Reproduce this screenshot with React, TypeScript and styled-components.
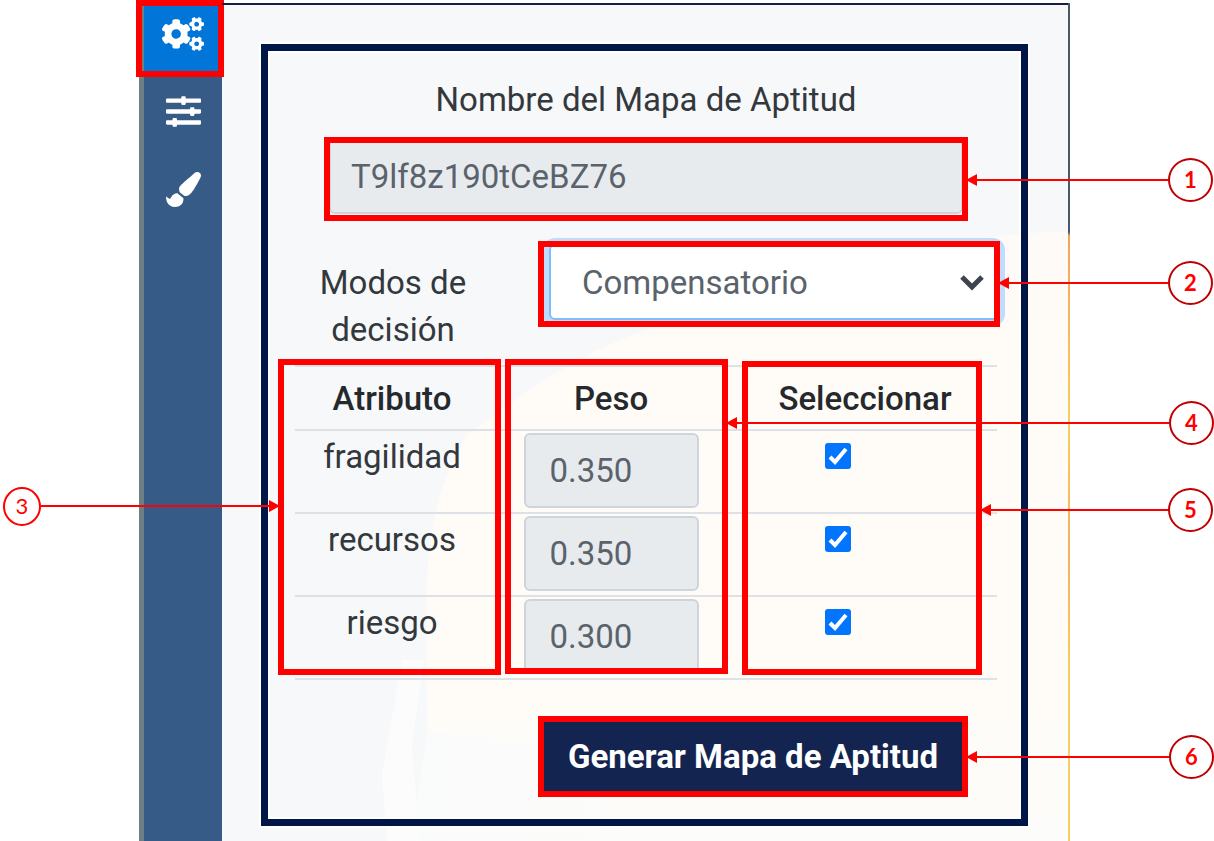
import React from "react";
import styled, { createGlobalStyle, css } from "styled-components";
import { FaCogs, FaPaintBrush, FaSlidersH } from "react-icons/fa";

const GlobalStyle = createGlobalStyle`
  *, *::before, *::after { box-sizing: border-box; }
  body {
    margin: 0;
    background: #fff;
    color: #33383d;
    font: 400 33px/47px Roboto, "Liberation Sans", sans-serif;
  }
`;

const Page = styled.div`
  display: flex;
  min-height: 100vh;
  padding: 3px 144px 0 139px;
`;

const Window = styled.div`
  position: relative;
  display: flex;
  flex: 1;
  min-width: 880px;
  background: #f7f8fa;
`;

const Sidebar = styled.nav`
  display: flex;
  flex-direction: column;
  width: 83px;
  flex: none;
  background: #355b86;
  border-left: 5px solid #6c7f82;
`;

const NavButton = styled.button<{ $active?: boolean }>`
  position: relative;
  display: flex;
  align-items: center;
  justify-content: center;
  height: 78px;
  padding: 0;
  border: 0;
  background: transparent;
  color: #fff;
  ${(p) =>
    p.$active &&
    css`
      height: 69px;
      padding-bottom: 8px;
      background: #0275d8;
    `}
`;

const Main = styled.main`
  position: relative;
  flex: 1;
  padding: 39px 40px 15px 39px;
  border-top: 2px solid #15203f;
  border-right: 2px solid;
  border-image: linear-gradient(#47596b 0 228px, #f3a45c 232px, #f8cf62 50%, #f3b060 65%, #f8cf62 80%) 1;
`;

const Backdrop = styled.svg`
  position: absolute;
  inset: 0;
  width: 100%;
  height: 100%;
`;

const TopEdge = styled.div`
  position: absolute;
  top: -2px;
  left: 0;
  right: 0;
  height: 2px;
  background: #15203f;
`;

const Card = styled.form`
  position: relative;
  min-height: 782px;
  padding: 25px 24px 0 27px;
  border: 7px solid #001647;
  box-shadow: 0 0 0 2px #fff, inset 0 0 0 2px #fff;
`;

const Title = styled.label`
  display: block;
  text-align: center;
`;

const Marked = styled.div`
  position: relative;
`;

const NameField = styled(Marked)`
  margin: 16px 34px 30px;
`;

const ReadOnlyInput = styled.input`
  display: block;
  width: 100%;
  height: 75px;
  padding: 0 20px;
  border: 2px solid #ced4da;
  border-radius: 6px;
  background: #e8ebee;
  color: #5a636c;
  font: inherit;
`;

const ModeRow = styled.div`
  display: flex;
  justify-content: space-between;
`;

const ModeLabel = styled.label`
  flex: 1;
  max-width: 196px;
  padding: 15px 20px 12px;
  text-align: center;
`;

const SelectField = styled(Marked)`
  width: 450px;
  height: 76px;
  margin-right: -2px;
`;

const Select = styled.select`
  width: 100%;
  height: 100%;
  padding: 0 50px 0 31px;
  border: 2px solid #80bdff;
  border-radius: 6px;
  box-shadow: 0 0 0 6px #bfdcff;
  appearance: none;
  background: #fff;
  color: #5a636c;
  font: inherit;
  outline: none;
`;

const Chevron = styled.svg`
  position: absolute;
  top: 30px;
  right: 14px;
  width: 26px;
  height: 18px;
  pointer-events: none;
`;

const TableArea = styled(Marked)`
  margin-bottom: 42px;
`;

const Table = styled.table`
  width: 100%;
  table-layout: fixed;
  border-spacing: 0;
  border-bottom: 2px solid #dee2e6;
`;

const HeadCell = styled.th<{ $width?: number }>`
  width: ${(p) => (p.$width ? `${p.$width}px` : "auto")};
  height: 64px;
  padding: 0;
  border-top: 2px solid #dee2e6;
  color: #24292e;
  font-weight: 500;
`;

const Cell = styled.td`
  height: 83px;
  padding: 2px 0 4px;
  border-top: 2px solid #dee2e6;
  text-align: center;
  vertical-align: top;
`;

const WeightInput = styled(ReadOnlyInput)`
  width: 175px;
  margin: 0 auto;
  padding: 0 24px;
`;

const Check = styled.input`
  appearance: none;
  display: block;
  width: 26px;
  height: 26px;
  margin: 10px auto 0 92px;
  border-radius: 3px;
  background: #0275ff
    url("data:image/svg+xml,%3Csvg xmlns='http://www.w3.org/2000/svg' viewBox='0 0 26 26'%3E%3Cpath d='M5 14l5 5L21 6' fill='none' stroke='%23fff' stroke-width='4'/%3E%3C/svg%3E");
`;

const SubmitField = styled(Marked)`
  width: 418px;
  margin: 0 35px 0 auto;
`;

const Submit = styled.button`
  display: block;
  width: 100%;
  height: 69px;
  padding: 0;
  border: 0;
  background: #12244f;
  color: #fff;
  font: inherit;
  font-weight: 700;
`;

const Frame = styled.div<{ $inset: string; $width?: number }>`
  position: absolute;
  inset: ${(p) => p.$inset};
  ${(p) => p.$width && `width: ${p.$width}px;`}
  border: 6px solid #f00;
  pointer-events: none;
`;

const Leader = styled.div<{ $length: number; $top: number; $left?: boolean }>`
  position: absolute;
  z-index: 1;
  top: ${(p) => p.$top}px;
  ${(p) => (p.$left ? "right" : "left")}: calc(100% + 4px);
  display: flex;
  flex-direction: ${(p) => (p.$left ? "row-reverse" : "row")};
  align-items: center;
  width: ${(p) => p.$length}px;
  height: 44px;
`;

const Arrow = styled.div<{ $left?: boolean }>`
  flex: 1;
  display: flex;
  align-items: center;
  flex-direction: ${(p) => (p.$left ? "row-reverse" : "row")};

  &::before {
    content: "";
    border: 6px solid transparent;
    ${(p) =>
      p.$left
        ? "border-left: 11px solid #f00; border-right: 0;"
        : "border-right: 11px solid #f00; border-left: 0;"}
  }

  &::after {
    content: "";
    flex: 1;
    height: 2px;
    background: #f00;
  }
`;

const Badge = styled.span<{ $small?: boolean }>`
  display: flex;
  align-items: center;
  justify-content: center;
  width: ${(p) => (p.$small ? 38 : 45)}px;
  height: ${(p) => (p.$small ? 39 : 44)}px;
  border: 2px solid ${(p) => (p.$small ? "#f00" : "#c00000")};
  border-radius: 50%;
  background: #fff;
  color: #f00;
  font: ${(p) => (p.$small ? 400 : 700)} 22px/24px Lato, "Liberation Sans", sans-serif;
`;

type CalloutProps = {
  label: number;
  inset: string;
  width?: number;
  length: number;
  top: number;
  left?: boolean;
};

function Callout({ label, inset, width, length, top, left }: CalloutProps) {
  return (
    <Frame $inset={inset} $width={width}>
      <Leader $length={length} $top={top} $left={left}>
        <Arrow $left={left} />
        <Badge $small={left}>{label}</Badge>
      </Leader>
    </Frame>
  );
}

const attributes = [
  { name: "fragilidad", weight: "0.350" },
  { name: "recursos", weight: "0.350" },
  { name: "riesgo", weight: "0.300" },
];

export default function App() {
  return (
    <>
      <GlobalStyle />
      <Page>
        <Window>
          <Sidebar>
            <NavButton $active aria-label="Configuración">
              <FaCogs size={42} />
              <Frame $inset="-3px -2px -5px -8px" />
            </NavButton>
            <NavButton aria-label="Parámetros">
              <FaSlidersH size={35} />
            </NavButton>
            <NavButton aria-label="Estilo">
              <FaPaintBrush size={35} />
            </NavButton>
          </Sidebar>
          <Main>
            <Backdrop viewBox="0 0 846 836" preserveAspectRatio="none" aria-hidden="true">
              <defs>
                <linearGradient id="warm" x1="0" y1="0" x2="0" y2="1">
                  <stop offset="0" stopColor="#fefaf7" />
                  <stop offset="0.3" stopColor="#fffcf7" />
                  <stop offset="0.75" stopColor="#fffcf7" />
                  <stop offset="1" stopColor="#fcfcfa" />
                </linearGradient>
                <linearGradient id="fade" x1="0" y1="0" x2="1" y2="0">
                  <stop offset="0" stopColor="#fafbfb" />
                  <stop offset="1" stopColor="#fcfcfa" />
                </linearGradient>
              </defs>
              <path
                d="M846 226C780 228 735 236 700 252C620 290 500 296 415 328C345 355 300 390 245 430C220 470 205 520 204 600L205 728L240 735V836H846Z"
                fill="url(#warm)"
              />
              <path d="M205 726L330 740L420 836H190Z" fill="url(#fade)" />
              <path d="M180 655L202 655L190 740L198 836H165L160 770Z" fill="#fcfcfc" />
            </Backdrop>
            <TopEdge />
            <Card onSubmit={(e) => e.preventDefault()}>
              <Title htmlFor="map-name">Nombre del Mapa de Aptitud</Title>
              <NameField>
                <ReadOnlyInput id="map-name" readOnly value="T9lf8z190tCeBZ76" />
                <Callout label={1} inset="-2px -5px -7px -5px" length={247} top={15} />
              </NameField>
              <ModeRow>
                <ModeLabel htmlFor="mode">Modos de decisión</ModeLabel>
                <SelectField>
                  <Select id="mode" defaultValue="Compensatorio">
                    <option>Compensatorio</option>
                  </Select>
                  <Chevron viewBox="0 0 26 18" aria-hidden="true">
                    <path d="M3 3L13 13L23 3" fill="none" stroke="#3d444b" strokeWidth="5" />
                  </Chevron>
                  <Callout label={2} inset="-3px -1px -7px -11px" length={215} top={14} />
                </SelectField>
              </ModeRow>
              <TableArea>
                <Table>
                  <thead>
                    <tr>
                      <HeadCell scope="col">Atributo</HeadCell>
                      <HeadCell scope="col" $width={244}>Peso</HeadCell>
                      <HeadCell scope="col" $width={264}>Seleccionar</HeadCell>
                    </tr>
                  </thead>
                  <tbody>
                    {attributes.map((a) => (
                      <tr key={a.name}>
                        <Cell>{a.name}</Cell>
                        <Cell>
                          <WeightInput readOnly aria-label={`Peso de ${a.name}`} value={a.weight} />
                        </Cell>
                        <Cell>
                          <Check type="checkbox" defaultChecked aria-label={`Seleccionar ${a.name}`} />
                        </Cell>
                      </tr>
                    ))}
                  </tbody>
                </Table>
                <Callout label={3} inset="-6px 496px 5px -17px" length={277} top={119} left />
                <Callout label={4} inset="-6px 269px 6px auto" width={223} length={488} top={36} />
                <Callout label={5} inset="-4px 15px 5px auto" width={240} length={233} top={121} />
              </TableArea>
              <SubmitField>
                <Submit type="submit">Generar Mapa de Aptitud</Submit>
                <Callout label={6} inset="-6px" length={248} top={13} />
              </SubmitField>
            </Card>
          </Main>
        </Window>
      </Page>
    </>
  );
}
